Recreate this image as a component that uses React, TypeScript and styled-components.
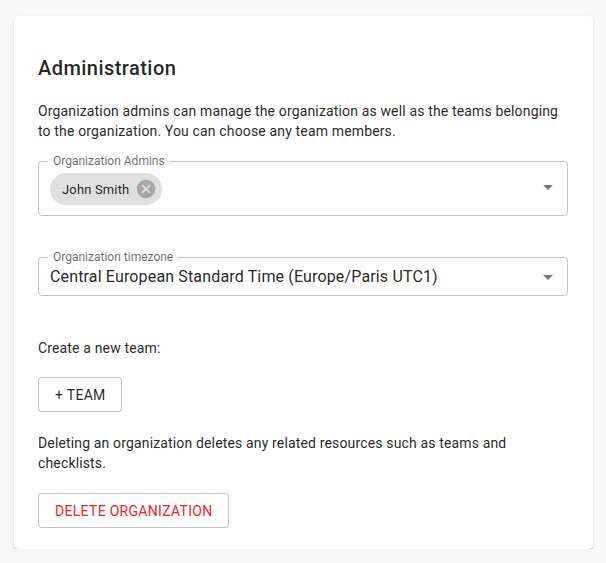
import React from "react";
import styled, { createGlobalStyle } from "styled-components";

const GlobalStyle = createGlobalStyle`
  body {
    margin: 0;
    background: #f8f8f8;
    font-family: Roboto, "Liberation Sans", sans-serif;
    color: rgba(0, 0, 0, 0.87);
  }
`;

const Card = styled.div`
  margin: 16px 13px 0 14px;
  padding: 36px 25px 21px 24px;
  background: #fff;
  border-radius: 4px;
  box-shadow: 0 2px 1px -1px rgba(0, 0, 0, 0.2), 0 1px 1px 0 rgba(0, 0, 0, 0.14),
    0 1px 3px 0 rgba(0, 0, 0, 0.12);
  display: flex;
  flex-direction: column;
  align-items: flex-start;
`;

const Title = styled.h2`
  margin: 0;
  font-size: 20px;
  font-weight: 500;
  line-height: 32px;
  letter-spacing: 0.45px;
`;

const Text = styled.p<{ $mt: number }>`
  margin: ${(p) => p.$mt}px 0 0;
  font-size: 14px;
  line-height: 20px;
  letter-spacing: 0.15px;
`;

const Field = styled.fieldset<{ $mt: number }>`
  align-self: stretch;
  margin: ${(p) => p.$mt}px 0 0;
  padding: 0 7px 0 11px;
  border: 1px solid rgba(0, 0, 0, 0.23);
  border-radius: 4px;
  min-width: 0;
`;

const Legend = styled.legend`
  margin-left: -2px;
  padding: 0 5px;
  font-size: 12px;
  line-height: 12px;
  color: rgba(0, 0, 0, 0.6);
`;

const FieldBody = styled.div<{ $h: number; $pt: number }>`
  height: ${(p) => p.$h}px;
  padding-top: ${(p) => p.$pt}px;
  box-sizing: border-box;
  display: flex;
  align-items: flex-start;
`;

const Value = styled.div`
  flex: 1;
  font-size: 16px;
  line-height: 24px;
  letter-spacing: 0.15px;
`;

const Chips = styled.div`
  flex: 1;
  display: flex;
  gap: 4px;
`;

const Chip = styled.div`
  height: 32px;
  border-radius: 16px;
  background: #e0e0e0;
  display: inline-flex;
  align-items: center;
  font-size: 13px;
  letter-spacing: 0.15px;
  span {
    padding: 0 12px;
  }
  svg {
    margin: 0 5px 0 -6px;
    fill: rgba(0, 0, 0, 0.26);
  }
`;

const Arrow = styled.svg<{ $mt: number }>`
  margin-top: ${(p) => p.$mt}px;
  fill: rgba(0, 0, 0, 0.54);
  flex-shrink: 0;
`;

const Button = styled.button<{ $mt: number; $danger?: boolean }>`
  margin-top: ${(p) => p.$mt}px;
  height: 35px;
  padding: 0 15px 0 16px;
  background: #fff;
  border: 1px solid rgba(0, 0, 0, 0.23);
  border-radius: 4px;
  font-family: Roboto, "Liberation Sans", sans-serif;
  font-size: 14px;
  font-weight: 400;
  letter-spacing: 0.3px;
  text-transform: uppercase;
  color: ${(p) => (p.$danger ? "#f21f1f" : "rgba(0, 0, 0, 0.87)")};
  cursor: pointer;
`;

const DropArrow = ({ mt }: { mt: number }) => (
  <Arrow $mt={mt} width="24" height="24" viewBox="0 0 24 24">
    <path d="M7 10l5 5 5-5z" />
  </Arrow>
);

export default function App() {
  return (
    <>
      <GlobalStyle />
      <Card>
        <Title>Administration</Title>
        <Text $mt={17}>
          Organization admins can manage the organization as well as the teams
          belonging to the organization. You can choose any team members.
        </Text>

        <Field $mt={14}>
          <Legend>Organization Admins</Legend>
          <FieldBody $h={48} $pt={6}>
            <Chips>
              <Chip>
                <span>John Smith</span>
                <svg width="22" height="22" viewBox="0 0 24 24">
                  <path d="M12 2C6.47 2 2 6.47 2 12s4.47 10 10 10 10-4.47 10-10S17.53 2 12 2zm5 13.59L15.59 17 12 13.41 8.41 17 7 15.59 10.59 12 7 8.41 8.41 7 12 10.59 15.59 7 17 8.41 13.41 12 17 15.59z" />
                </svg>
              </Chip>
            </Chips>
            <DropArrow mt={2} />
          </FieldBody>
        </Field>

        <Field $mt={35}>
          <Legend>Organization timezone</Legend>
          <FieldBody $h={32} $pt={2}>
            <Value>Central European Standard Time (Europe/Paris UTC1)</Value>
            <DropArrow mt={0} />
          </FieldBody>
        </Field>

        <Text $mt={42}>Create a new team:</Text>
        <Button $mt={19}>+ Team</Button>

        <Text $mt={21}>
          Deleting an organization deletes any related resources such as teams
          and checklists.
        </Text>
        <Button $mt={20} $danger>
          Delete organization
        </Button>
      </Card>
    </>
  );
}
